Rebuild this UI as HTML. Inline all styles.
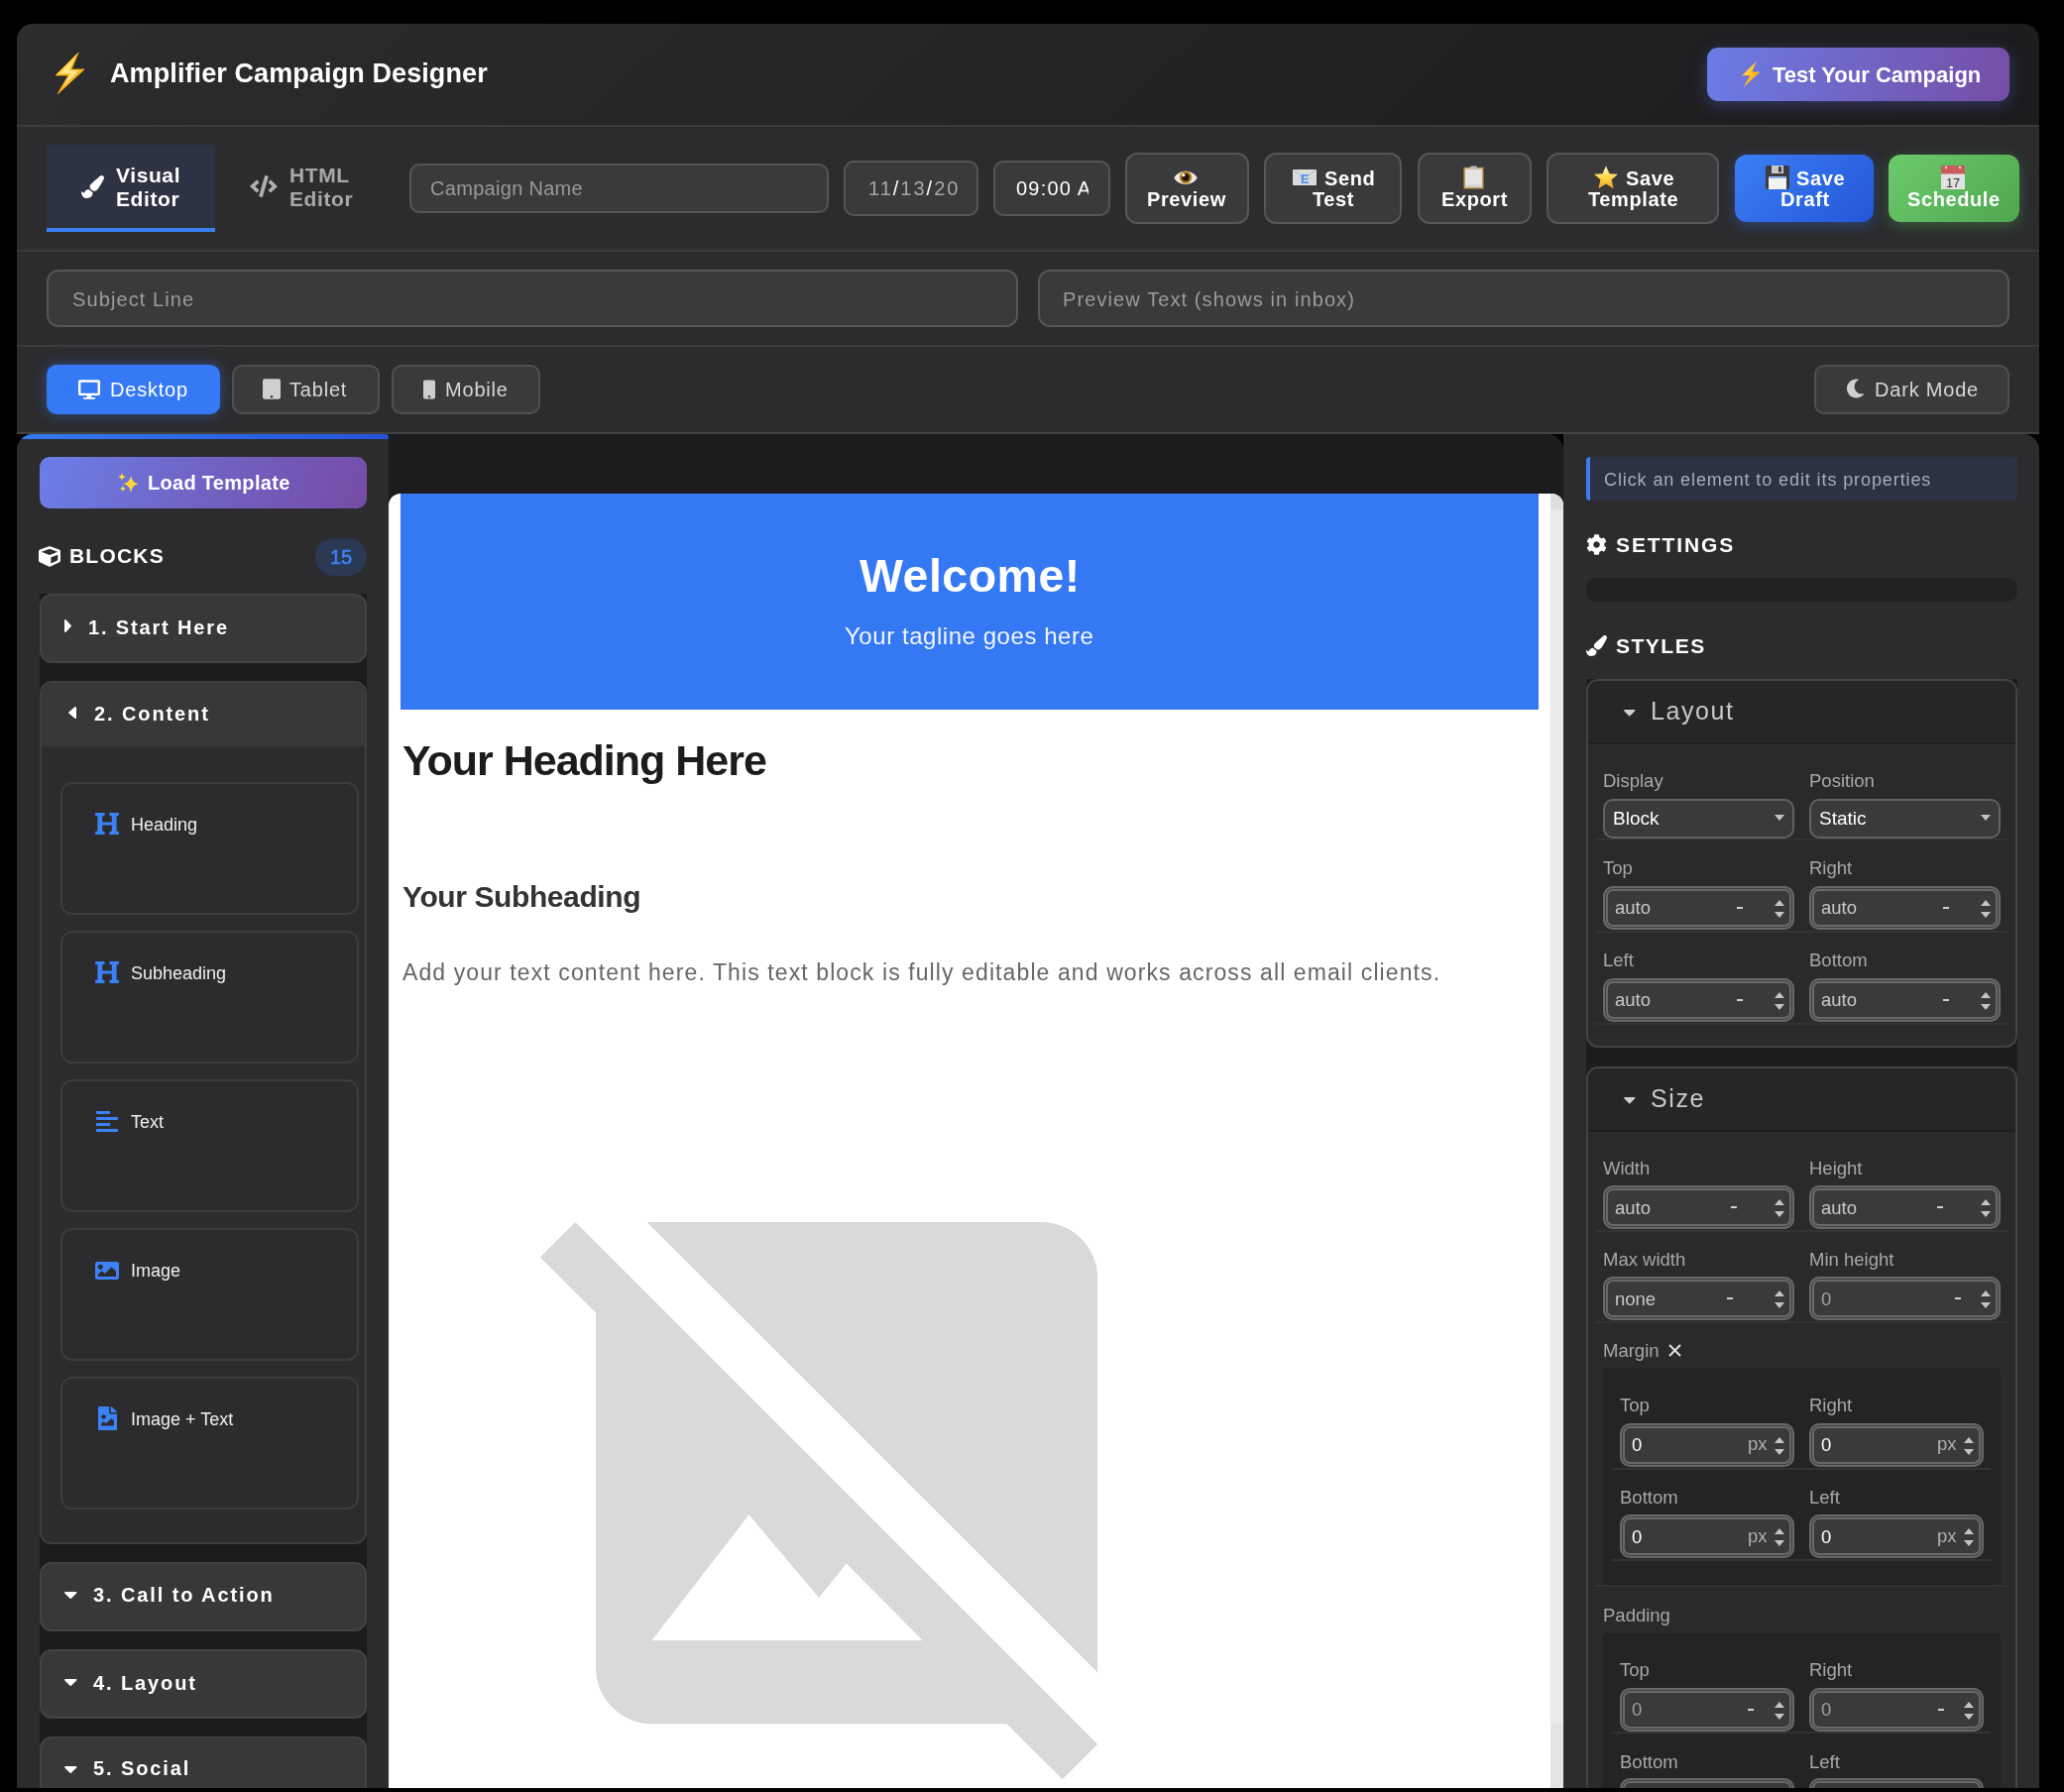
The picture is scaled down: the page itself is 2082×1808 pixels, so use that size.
<!DOCTYPE html>
<html><head><meta charset="utf-8">
<style>
*{box-sizing:border-box;margin:0;padding:0}
html,body{width:2082px;height:1808px;overflow:hidden;background:#000;font-family:"Liberation Sans",sans-serif;position:relative}
.a{position:absolute}
.t{position:absolute;white-space:nowrap;line-height:1;will-change:transform}
svg{position:absolute;display:block}
.hl{position:absolute;left:17px;width:2040px;height:2px;background:#3b3b3d}
.inp{position:absolute;background:#3a3a3c;border:2px solid #565658;border-radius:10px}
.btn{position:absolute;background:#3a3a3c;border:2px solid #575759;border-radius:12px}
.bt{position:absolute;white-space:nowrap;line-height:1;will-change:transform;color:#fff;font-weight:700;font-size:20px;letter-spacing:0.6px}
.dv{position:absolute;top:368px;height:50px;background:#3a3a3c;border:2px solid #505052;border-radius:10px}
.dt{position:absolute;white-space:nowrap;line-height:1;will-change:transform;color:#d8d8d8;font-size:20px;letter-spacing:0.8px;top:383px}
</style></head>
<body>
<!-- ===== HEADER ===== -->
<div class="a" style="left:17px;top:24px;width:2040px;height:103px;border-radius:16px 16px 0 0;background:linear-gradient(135deg,#2c2c2e 0%,#1c1c1e 100%)"></div>
<div class="a" style="left:17px;top:127px;width:2040px;height:311px;background:#2c2c2e"></div>
<div class="hl" style="top:126px"></div>
<div class="hl" style="top:252px"></div>
<div class="hl" style="top:348px"></div>
<div class="hl" style="top:436px;background:#424244"></div>

<!-- bolt -->
<svg style="left:54px;top:52px" width="32" height="44" viewBox="0 0 32 44">
<defs><linearGradient id="bg1" x1="0" y1="0" x2="1" y2="1"><stop offset="0" stop-color="#ffe680"/><stop offset="0.5" stop-color="#ffc21a"/><stop offset="1" stop-color="#f29a12"/></linearGradient></defs>
<polygon points="25,1 2,24 15,24 4,43 31,18 18,18" fill="url(#bg1)" stroke="#f0a020" stroke-width="1"/>
<polygon points="22,6 7,22 17,22 10,35 26,19 15,19" fill="#fff7c0" opacity="0.7"/>
</svg>
<div class="t" style="left:111px;top:61px;font-size:27px;font-weight:700;color:#fff;letter-spacing:0.1px">Amplifier Campaign Designer</div>

<!-- Test your campaign -->
<div class="a" style="left:1722px;top:48px;width:305px;height:54px;border-radius:11px;background:linear-gradient(100deg,#6b7ce6 0%,#7160bd 60%,#764ea6 100%);box-shadow:0 4px 16px rgba(90,110,230,0.35)"></div>
<svg style="left:1754px;top:61px" width="24" height="28" viewBox="0 0 32 44">
<polygon points="25,1 2,24 15,24 4,43 31,18 18,18" fill="url(#bg1)"/>
</svg>
<div class="t" style="left:1788px;top:64.5px;font-size:22px;font-weight:700;color:#fff;letter-spacing:0px">Test Your Campaign</div>

<!-- ===== TOOLBAR ===== -->
<div class="a" style="left:47px;top:146px;width:170px;height:88px;background:#2d3343"></div>
<div class="a" style="left:47px;top:230px;width:170px;height:4px;background:#3b7df2"></div>
<svg style="left:82px;top:177px" width="23" height="23" viewBox="0 0 512 512"><path fill="#fff" d="M167.02 309.34c-40.12 2.58-76.53 17.86-97.19 72.3-2.35 6.210-8 9.98-14.59 9.98-11.11 0-45.46-27.67-55.25-34.35C0 439.62 37.93 512 128 512c75.86 0 128-43.770 128-120.19 0-3.11-.65-6.08-.97-9.13l-88.01-73.34zM457.89 0c-15.16 0-29.37 6.71-40.210 16.45C213.27 199.05 192 203.34 192 257.09c0 13.7 3.25 26.76 8.73 38.7l63.82 53.18c7.21 1.8 14.64 3.03 22.39 3.03 62.11 0 98.11-45.47 211.16-256.46 7.38-14.35 13.9-29.85 13.9-45.99C512 20.64 486 0 457.890 0z"/></svg>
<div class="t" style="left:117px;top:165px;font-size:21px;font-weight:700;color:#fff;letter-spacing:0.6px;line-height:24px">Visual<br>Editor</div>
<svg style="left:252px;top:177px" width="28" height="22" viewBox="0 0 640 512"><path fill="#b0b0b2" d="M278.9 511.5l-61-17.7c-6.4-1.8-10-8.5-8.2-14.9L346.2 8.7c1.8-6.4 8.5-10 14.9-8.2l61 17.7c6.4 1.8 10 8.5 8.2 14.9L293.8 503.300c-1.9 6.4-8.5 10.1-14.9 8.2zm-114-112.2l43.5-46.4c4.6-4.9 4.3-12.7-.8-17.2L117 256l90.6-79.7c5.1-4.5 5.5-12.3.8-17.2l-43.5-46.4c-4.5-4.8-12.1-5.1-17-.5L3.8 247.2c-5.1 4.7-5.1 12.8 0 17.5l144.1 135.1c4.9 4.6 12.5 4.4 17-.5zm327.2.6l144.1-135.1c5.1-4.7 5.1-12.8 0-17.5L492.1 112.1c-4.8-4.5-12.4-4.3-17 .5L431.6 159c-4.6 4.9-4.3 12.7.8 17.2L523 256l-90.6 79.7c-5.1 4.5-5.5 12.3-.8 17.2l43.5 46.4c4.5 4.9 12.1 5.1 17 .6z"/></svg>
<div class="t" style="left:292px;top:165px;font-size:21px;font-weight:700;color:#a9a9ab;letter-spacing:0.6px;line-height:24px">HTML<br>Editor</div>

<div class="inp" style="left:413px;top:165px;width:423px;height:50px"></div>
<div class="t" style="left:434px;top:180.3px;font-size:20px;color:#9a9a9c;letter-spacing:0.3px">Campaign Name</div>
<div class="inp" style="left:851px;top:162px;width:136px;height:56px;background:#3a3a3c"></div>
<div class="t" style="left:876px;top:180.3px;font-size:20px;color:#a8a8aa;letter-spacing:2px">11<span style="color:#fff">/</span>13<span style="color:#fff">/</span>20</div>
<div class="inp" style="left:1002px;top:162px;width:118px;height:56px;background:#3a3a3c"></div>
<div class="a" style="left:1020px;top:170px;width:78px;height:40px;overflow:hidden"><div class="t" style="left:5px;top:10.3px;font-size:20px;color:#fff;letter-spacing:1.2px">09:00 A</div></div>

<div class="btn" style="left:1135px;top:154px;width:125px;height:72px"></div>
<div class="btn" style="left:1275px;top:154px;width:139px;height:72px"></div>
<div class="btn" style="left:1430px;top:154px;width:115px;height:72px"></div>
<div class="btn" style="left:1560px;top:154px;width:174px;height:72px"></div>
<div class="a" style="left:1750px;top:156px;width:140px;height:68px;border-radius:12px;background:linear-gradient(135deg,#3b7ef5 0%,#2456d6 100%);box-shadow:0 4px 14px rgba(50,110,240,0.35)"></div>
<div class="a" style="left:1905px;top:156px;width:132px;height:68px;border-radius:12px;background:linear-gradient(135deg,#6bcb6b 0%,#4fa64f 100%);box-shadow:0 4px 14px rgba(90,200,90,0.3)"></div>
<!-- eye -->
<svg style="left:1184px;top:170px" width="24" height="18" viewBox="0 0 24 18"><defs><radialGradient id="irg" cx="0.5" cy="0.5" r="0.5"><stop offset="0.55" stop-color="#8a5a1c"/><stop offset="1" stop-color="#d4a21e"/></radialGradient></defs><path d="M0.3 9.5 C5 0.5, 19 0.5, 23.7 9.5 C19 18, 5 18, 0.3 9.5Z" fill="#efe9ef"/><circle cx="12" cy="9" r="6.4" fill="url(#irg)"/><circle cx="12" cy="9" r="3.7" fill="#24140e"/><circle cx="9.8" cy="6.6" r="1.7" fill="#fff"/></svg>
<div class="bt" style="left:1156.5px;top:191px">Preview</div>
<!-- envelope -->
<svg style="left:1304px;top:171px" width="24" height="16" viewBox="0 0 24 16"><rect x="0" y="0" width="24" height="16" fill="#dcdcdc"/><path d="M0 0 L12 9 L24 0" fill="none" stroke="#b5b5b5" stroke-width="0.8"/><path d="M0 16 L9 7 M24 16 L15 7" stroke="#c4c4c4" stroke-width="0.6"/><text x="12" y="13.5" font-family="Liberation Sans" font-weight="700" font-size="13" text-anchor="middle" fill="#4a8df0">E</text></svg>
<div class="bt" style="left:1335.5px;top:170px">Send</div>
<div class="bt" style="left:1324px;top:191px">Test</div>
<!-- clipboard -->
<svg style="left:1476px;top:167px" width="21" height="24" viewBox="0 0 21 24"><rect x="0.5" y="1.8" width="20" height="21.7" fill="#c89a4e"/><rect x="2" y="3.5" width="17" height="18.5" fill="#e4e4e4"/><rect x="2" y="19.5" width="17" height="2" fill="#cfcfcf"/><rect x="7" y="0.5" width="7" height="3" rx="1.5" fill="#b9bcc4"/></svg>
<div class="bt" style="left:1453.5px;top:191px">Export</div>
<!-- star -->
<svg style="left:1607px;top:167px" width="26" height="24" viewBox="0 0 26 24"><defs><linearGradient id="stg" x1="0" y1="0" x2="0" y2="1"><stop offset="0" stop-color="#fff6c8"/><stop offset="0.5" stop-color="#ffd84a"/><stop offset="1" stop-color="#e9a320"/></linearGradient></defs><polygon points="13,0.5 16.5,8.2 25,8.8 18.6,14.3 20.6,23.3 13,18.6 5.4,23.3 7.4,14.3 1,8.8 9.5,8.2" fill="url(#stg)"/></svg>
<div class="bt" style="left:1639.5px;top:170px">Save</div>
<div class="bt" style="left:1602px;top:191px">Template</div>
<!-- floppy -->
<svg style="left:1781px;top:167px" width="24" height="24" viewBox="0 0 24 24"><rect x="0" y="0" width="24" height="24" rx="2" fill="#3d3d40"/><rect x="6" y="0" width="12" height="8" fill="#c9c9cc"/><rect x="13" y="1.2" width="3" height="5.5" fill="#3d3d40"/><rect x="3" y="11" width="18" height="13" fill="#f2f2f2"/><rect x="3" y="11" width="18" height="2" fill="#8fb8e8"/></svg>
<div class="bt" style="left:1812px;top:170px">Save</div>
<div class="bt" style="left:1796px;top:191px">Draft</div>
<!-- calendar -->
<svg style="left:1958px;top:167px" width="24" height="24" viewBox="0 0 24 24"><rect x="0" y="0" width="24" height="24" fill="#e2e2e2"/><rect x="0" y="0" width="24" height="8.5" fill="#c95b5b"/><circle cx="5" cy="2" r="1.2" fill="#d8e8d0"/><circle cx="19" cy="2" r="1.2" fill="#d8e8d0"/><text x="12" y="21.5" font-family="Liberation Sans" font-size="12.5" text-anchor="middle" fill="#333">17</text></svg>
<div class="bt" style="left:1923.5px;top:191px">Schedule</div>


<!-- ===== SUBJECT ROW ===== -->
<div class="inp" style="left:47px;top:272px;width:980px;height:58px;border-radius:12px"></div>
<div class="t" style="left:73px;top:292px;font-size:20px;color:#9c9c9e;letter-spacing:1.1px">Subject Line</div>
<div class="inp" style="left:1047px;top:272px;width:980px;height:58px;border-radius:12px"></div>
<div class="t" style="left:1072px;top:292px;font-size:20px;color:#9c9c9e;letter-spacing:1.1px">Preview Text (shows in inbox)</div>

<!-- ===== DEVICE ROW ===== -->
<div class="a" style="left:47px;top:368px;width:175px;height:50px;border-radius:10px;background:#3679f5;box-shadow:0 0 14px rgba(54,121,245,0.45)"></div>
<svg style="left:79px;top:383px" width="22" height="20" viewBox="0 0 576 512"><path fill="#fff" d="M528 0H48C21.5 0 0 21.5 0 48v320c0 26.5 21.5 48 48 48h192l-16 48h-72c-13.3 0-24 10.7-24 24s10.7 24 24 24h272c13.3 0 24-10.7 24-24s-10.7-24-24-24h-72l-16-48h192c26.5 0 48-21.5 48-48V48c0-26.5-21.5-48-48-48zm-16 352H64V64h448v288z"/></svg>
<div class="dt" style="left:111px;color:#fff">Desktop</div>
<div class="dv" style="left:234px;width:149px"></div>
<svg style="left:265px;top:382px" width="18" height="21" viewBox="0 0 448 512"><path fill="#cfcfd1" d="M400 0H48C21.5 0 0 21.5 0 48v416c0 26.5 21.5 48 48 48h352c26.5 0 48-21.5 48-48V48c0-26.5-21.5-48-48-48zM224 480c-17.7 0-32-14.3-32-32s14.3-32 32-32 32 14.3 32 32-14.3 32-32 32z"/></svg>
<div class="dt" style="left:292px">Tablet</div>
<div class="dv" style="left:395px;width:150px"></div>
<svg style="left:427px;top:383px" width="12" height="20" viewBox="0 0 320 512"><path fill="#cfcfd1" d="M272 0H48C21.5 0 0 21.5 0 48v416c0 26.5 21.5 48 48 48h224c26.5 0 48-21.5 48-48V48c0-26.5-21.5-48-48-48zM160 480c-17.7 0-32-14.3-32-32s14.3-32 32-32 32 14.3 32 32-14.3 32-32 32z"/></svg>
<div class="dt" style="left:449px">Mobile</div>
<div class="dv" style="left:1830px;width:197px"></div>
<svg style="left:1862px;top:382px" width="19" height="20" viewBox="0 0 512 512"><path fill="#cfcfd1" d="M283.211 512c78.962 0 151.079-35.925 198.857-94.792 7.068-8.708-.639-21.43-11.562-19.35-124.203 23.654-238.262-71.576-238.262-197.87 0-72.748 38.947-139.645 102.245-175.67 9.792-5.545 7.854-20.379-3.158-22.415A258.156 258.156 0 0 0 283.211 0c-141.309 0-256 114.511-256 256 0 141.309 114.511 256 256 256z"/></svg>
<div class="dt" style="left:1891px">Dark Mode</div>
<!-- ===== MAIN ===== -->
<div class="a" style="left:380px;top:438px;width:1197px;height:1366px;background:#1c1c1e;border-radius:0 16px 0 0"></div>
<div class="a" style="left:1577px;top:438px;width:480px;height:1366px;background:#2c2c2e;border-radius:0 16px 0 0"></div>
<div class="a" style="left:17px;top:438px;width:375px;height:1366px;background:#2c2c2e;border-radius:16px 4px 0 0;overflow:hidden"><div class="a" style="left:0;top:0;width:375px;height:5px;background:linear-gradient(90deg,#3479f2,#2454d8)"></div></div>
<div class="a" style="left:40px;top:461px;width:330px;height:52px;border-radius:10px;background:linear-gradient(110deg,#6a7fe8 0%,#7160c0 55%,#764ca6 100%)"></div>
<svg style="left:118px;top:477px" width="23" height="21" viewBox="0 0 23 21"><path d="M14 3 Q15 10 22 11 Q15 12 14 20 Q13 12 6 11 Q13 10 14 3Z" fill="#ffd83a"/><path d="M5 0 Q5.5 3.5 9 4 Q5.5 4.5 5 8 Q4.5 4.5 1 4 Q4.5 3.5 5 0Z" fill="#ffd83a"/><path d="M6 13 Q6.4 15.6 9 16 Q6.4 16.4 6 19 Q5.6 16.4 3 16 Q5.6 15.6 6 13Z" fill="#ffd83a"/></svg>
<div class="t" style="left:148.5px;top:477.4px;font-size:20px;color:#fff;font-weight:700;letter-spacing:0.3px;">Load Template</div>
<svg style="left:39px;top:551px" width="22" height="21" viewBox="0 0 512 512" preserveAspectRatio="none"><path fill="#fff" d="M239.1 6.3l-208 78c-18.7 7-31.1 25-31.1 45v225.1c0 18.2 10.3 34.8 26.5 42.9l208 104c13.5 6.8 29.4 6.8 42.9 0l208-104c16.3-8.1 26.5-24.8 26.5-42.9V129.3c0-20-12.4-37.9-31.1-44.900l-208-78C262 2.2 250 2.2 239.1 6.3zM256 68.4l192 72v1.1l-192 78-192-78v-1.1l192-72zm32 356V275.5l160-65v133.9l-160 80z"/></svg>
<div class="t" style="left:70px;top:550.4px;font-size:21px;color:#fff;font-weight:700;letter-spacing:1.2px;">BLOCKS</div>
<div class="a" style="left:318px;top:543px;width:52px;height:38px;border-radius:19px;background:#2b3954"></div>
<div class="t" style="left:332.5px;top:552.0px;font-size:20px;color:#3b82f6;-webkit-text-stroke:0.6px #3b82f6;">15</div>
<div class="a" style="left:40px;top:599px;width:330px;height:1205px;background:#1c1c1e"></div>
<div class="a" style="left:40px;top:599px;width:330px;height:70px;background:#38383a;border:2px solid #434345;border-radius:12px"></div>
<svg style="left:65px;top:625px" width="7" height="13" viewBox="0 107 169 298" preserveAspectRatio="none"><path fill="#fff" d="M0 384.662V127.338c0-17.818 21.543-26.741 34.142-14.142l128.662 128.662c7.81 7.81 7.81 20.474 0 28.284L34.142 398.804C21.543 411.404 0 402.480 0 384.662z"/></svg>
<div class="t" style="left:89px;top:622.5px;font-size:20px;color:#fff;font-weight:700;letter-spacing:1.85px;">1. Start Here</div>
<div class="a" style="left:40px;top:687px;width:330px;height:871px;background:#2c2c2e;border:2px solid #3e3e40;border-radius:12px;overflow:hidden"><div class="a" style="left:0;top:0;width:326px;height:64px;background:#38383a"></div></div>
<svg style="left:69px;top:713px" width="8" height="12" viewBox="23 107 169 298" preserveAspectRatio="none"><path fill="#fff" d="M192 127.338v257.324c0 17.818-21.543 26.741-34.142 14.142L29.196 270.142c-7.81-7.81-7.81-20.474 0-28.284l128.662-128.662c12.599-12.6 34.142-3.676 34.142 14.142z"/></svg>
<div class="t" style="left:94.6px;top:710.3px;font-size:20px;color:#fff;font-weight:700;letter-spacing:1.9px;">2. Content</div>
<div class="a" style="left:61px;top:789px;width:301px;height:133.5px;border:2px solid #3c3c3e;border-radius:12px"></div>
<svg style="left:96px;top:820px" width="24" height="22" viewBox="16 32 480 448" preserveAspectRatio="none"><path fill="#3b82f6" d="M448 96v320h32a16 16 0 0 1 16 16v32a16 16 0 0 1-16 16H320a16 16 0 0 1-16-16v-32a16 16 0 0 1 16-16h32V288H160v128h32a16 16 0 0 1 16 16v32a16 16 0 0 1-16 16H32a16 16 0 0 1-16-16v-32a16 16 0 0 1 16-16h32V96H32a16 16 0 0 1-16-16V48a16 16 0 0 1 16-16h160a16 16 0 0 1 16 16v32a16 16 0 0 1-16 16h-32v128h192V96h-32a16 16 0 0 1-16-16V48a16 16 0 0 1 16-16h160a16 16 0 0 1 16 16v32a16 16 0 0 1-16 16z"/></svg>
<div class="t" style="left:132.3px;top:823.1px;font-size:18px;color:#f0f0f0;">Heading</div>
<div class="a" style="left:61px;top:939px;width:301px;height:133.5px;border:2px solid #3c3c3e;border-radius:12px"></div>
<svg style="left:96px;top:970px" width="24" height="22" viewBox="16 32 480 448" preserveAspectRatio="none"><path fill="#3b82f6" d="M448 96v320h32a16 16 0 0 1 16 16v32a16 16 0 0 1-16 16H320a16 16 0 0 1-16-16v-32a16 16 0 0 1 16-16h32V288H160v128h32a16 16 0 0 1 16 16v32a16 16 0 0 1-16 16H32a16 16 0 0 1-16-16v-32a16 16 0 0 1 16-16h32V96H32a16 16 0 0 1-16-16V48a16 16 0 0 1 16-16h160a16 16 0 0 1 16 16v32a16 16 0 0 1-16 16h-32v128h192V96h-32a16 16 0 0 1-16-16V48a16 16 0 0 1 16-16h160a16 16 0 0 1 16 16v32a16 16 0 0 1-16 16z"/></svg>
<div class="t" style="left:132.3px;top:973.1px;font-size:18px;color:#f0f0f0;">Subheading</div>
<div class="a" style="left:61px;top:1089px;width:301px;height:133.5px;border:2px solid #3c3c3e;border-radius:12px"></div>
<svg style="left:97px;top:1121px" width="22" height="21" viewBox="0 32 448 448" preserveAspectRatio="none"><path fill="#3b82f6" d="M12.83 352h262.34A12.82 12.82 0 0 0 288 339.17v-38.34A12.82 12.82 0 0 0 275.17 288H12.83A12.82 12.82 0 0 0 0 300.83v38.34A12.82 12.82 0 0 0 12.83 352zm0-256h262.34A12.82 12.82 0 0 0 288 83.17V44.83A12.82 12.82 0 0 0 275.17 32H12.83A12.82 12.82 0 0 0 0 44.83v38.34A12.82 12.82 0 0 0 12.83 96zM432 160H16a16 16 0 0 0-16 16v32a16 16 0 0 0 16 16h416a16 16 0 0 0 16-16v-32a16 16 0 0 0-16-16zm0 256H16a16 16 0 0 0-16 16v32a16 16 0 0 0 16 16h416a16 16 0 0 0 16-16v-32a16 16 0 0 0-16-16z"/></svg>
<div class="t" style="left:132.3px;top:1123.1px;font-size:18px;color:#f0f0f0;">Text</div>
<div class="a" style="left:61px;top:1239px;width:301px;height:133.5px;border:2px solid #3c3c3e;border-radius:12px"></div>
<svg style="left:96px;top:1273px" width="24" height="18" viewBox="0 64 512 384" preserveAspectRatio="none"><path fill="#3b82f6" d="M464 448H48c-26.51 0-48-21.49-48-48V112c0-26.51 21.49-48 48-48h416c26.51 0 48 21.49 48 48v288c0 26.51-21.49 48-48 48zM112 120c-30.928 0-56 25.072-56 56s25.072 56 56 56 56-25.072 56-56-25.072-56-56-56zM64 384h384V272l-87.515-87.515c-4.686-4.686-12.284-4.686-16.971 0L208 320l-55.515-55.515c-4.686-4.686-12.284-4.686-16.971 0L64 336v48z"/></svg>
<div class="t" style="left:132.3px;top:1273.1px;font-size:18px;color:#f0f0f0;">Image</div>
<div class="a" style="left:61px;top:1389px;width:301px;height:133.5px;border:2px solid #3c3c3e;border-radius:12px"></div>
<svg style="left:99px;top:1419px" width="19" height="24" viewBox="0 0 384 512" preserveAspectRatio="none"><path fill="#3b82f6" d="M384 121.941V128H256V0h6.059a24 24 0 0 1 16.97 7.029l97.941 97.941a24.002 24.002 0 0 1 7.03 16.971zM248 160c-13.2 0-24-10.8-24-24V0H24C10.745 0 0 10.745 0 24v464c0 13.255 10.745 24 24 24h336c13.255 0 24-10.745 24-24V160H248zm-135.455 16c26.51 0 48 21.49 48 48s-21.49 48-48 48-48-21.49-48-48 21.491-48 48-48zm208 240h-256l.485-48.485L104.545 328c4.686-4.686 11.799-4.201 16.485.485L160.545 368 264.06 264.485c4.686-4.686 12.284-4.686 16.971 0L320.545 304v112z"/></svg>
<div class="t" style="left:132.3px;top:1423.1px;font-size:18px;color:#f0f0f0;">Image + Text</div>
<div class="a" style="left:40px;top:1576px;width:330px;height:70px;background:#38383a;border:2px solid #434345;border-radius:12px"></div>
<svg style="left:65px;top:1606px" width="12.5" height="7" viewBox="10 192 300 169" preserveAspectRatio="none"><path fill="#fff" d="M31.3 192h257.3c17.8 0 26.7 21.5 14.1 34.1L174.1 354.8c-7.8 7.8-20.5 7.8-28.3 0L17.2 226.1C4.6 213.5 13.5 192 31.3 192z"/></svg>
<div class="t" style="left:94.3px;top:1599.1px;font-size:20px;color:#fff;font-weight:700;letter-spacing:1.9px;">3. Call to Action</div>
<div class="a" style="left:40px;top:1664px;width:330px;height:70px;background:#38383a;border:2px solid #434345;border-radius:12px"></div>
<svg style="left:65px;top:1694px" width="12.5" height="7" viewBox="10 192 300 169" preserveAspectRatio="none"><path fill="#fff" d="M31.3 192h257.3c17.8 0 26.7 21.5 14.1 34.1L174.1 354.8c-7.8 7.8-20.5 7.8-28.3 0L17.2 226.1C4.6 213.5 13.5 192 31.3 192z"/></svg>
<div class="t" style="left:94.3px;top:1687.6px;font-size:20px;color:#fff;font-weight:700;letter-spacing:1.9px;">4. Layout</div>
<div class="a" style="left:40px;top:1752px;width:330px;height:78px;background:#38383a;border:2px solid #434345;border-radius:12px"></div>
<svg style="left:65px;top:1782px" width="12.5" height="7" viewBox="10 192 300 169" preserveAspectRatio="none"><path fill="#fff" d="M31.3 192h257.3c17.8 0 26.7 21.5 14.1 34.1L174.1 354.8c-7.8 7.8-20.5 7.8-28.3 0L17.2 226.1C4.6 213.5 13.5 192 31.3 192z"/></svg>
<div class="t" style="left:94.3px;top:1774.4px;font-size:20px;color:#fff;font-weight:700;letter-spacing:1.9px;">5. Social</div>
<div class="a" style="left:392px;top:498px;width:1185px;height:1306px;background:#fff;border-radius:12px 12px 0 0;overflow:hidden"><div class="a" style="left:1172px;top:0;width:13px;height:1306px;background:#e9e9e9"></div><div class="a" style="left:1172px;top:0;width:13px;height:16px;background:#dedede"></div><div class="a" style="left:1172px;top:1242px;width:13px;height:64px;background:#e3e3e3"></div></div>
<div class="a" style="left:404px;top:498px;width:1148px;height:218px;background:#3578f3"></div>
<div class="t" style="left:867px;top:557.6px;font-size:46.5px;color:#fff;font-weight:700;letter-spacing:0.5px;">Welcome!</div>
<div class="t" style="left:852px;top:629.7px;font-size:24px;color:#f2f6ff;letter-spacing:0.55px;">Your tagline goes here</div>
<div class="t" style="left:405.7px;top:746.1px;font-size:43px;color:#1c1c1e;font-weight:700;letter-spacing:-1px;">Your Heading Here</div>
<div class="t" style="left:405.7px;top:890.3px;font-size:30px;color:#333;font-weight:700;letter-spacing:-0.4px;">Your Subheading</div>
<div class="t" style="left:405.7px;top:969.9px;font-size:23px;color:#666;letter-spacing:1.1px;">Add your text content here. This text block is fully editable and works across all email clients.</div>
<svg style="left:0;top:0" width="2082" height="1808" viewBox="0 0 2082 1808"><g fill="#d9d9d9">
<path d="M652.6 1232.9 H1050 A57 57 0 0 1 1107.2 1290 V1687.5 Z"/>
<path d="M580.4 1232.9 L1107.2 1759.7 L1071.7 1795.2 L1015.6 1739.3 H658 A57 57 0 0 1 601 1682 V1324.6 L544.8 1268.4 Z M657.5 1655 H930.6 L853.8 1577.6 L826.1 1612.1 L755.5 1528.2 Z" fill-rule="evenodd"/>
</g></svg>
<div class="a" style="left:1600px;top:461px;width:435px;height:44px;background:#2b3343;border-left:4px solid #3b7ef2;border-radius:4px"></div>
<div class="t" style="left:1618px;top:475.0px;font-size:18px;color:#a6adba;letter-spacing:0.9px;">Click an element to edit its properties</div>
<svg style="left:1600px;top:539px" width="21" height="21" viewBox="0 0 512 512" preserveAspectRatio="none"><path fill="#fff" d="M487.4 315.7l-42.6-24.6c4.3-23.2 4.3-47 0-70.2l42.6-24.6c4.9-2.8 7.1-8.6 5.5-14-11.1-35.6-30-67.8-54.7-94.6-3.8-4.1-10-5.1-14.8-2.3L380.8 110c-17.9-15.4-38.5-27.3-60.8-35.1V25.8c0-5.6-3.9-10.5-9.4-11.7-36.7-8.2-74.3-7.8-109.2 0-5.5 1.2-9.4 6.1-9.4 11.7V75c-22.2 7.9-42.8 19.8-60.8 35.1L88.7 85.5c-4.9-2.8-11-1.9-14.8 2.3-24.7 26.7-43.6 58.9-54.7 94.6-1.7 5.4.6 11.2 5.5 14L67.3 221c-4.3 23.2-4.3 47 0 70.2l-42.6 24.6c-4.9 2.8-7.1 8.6-5.5 14 11.1 35.6 30 67.8 54.7 94.6 3.8 4.1 10 5.1 14.8 2.3l42.6-24.6c17.9 15.4 38.5 27.3 60.8 35.1v49.2c0 5.6 3.9 10.5 9.4 11.7 36.7 8.2 74.3 7.8 109.2 0 5.5-1.2 9.4-6.1 9.4-11.7v-49.2c22.2-7.9 42.8-19.8 60.8-35.1l42.6 24.6c4.9 2.8 11 1.9 14.8-2.3 24.7-26.7 43.6-58.9 54.7-94.6 1.5-5.5-.7-11.3-5.6-14.1zM256 336c-44.1 0-80-35.9-80-80s35.9-80 80-80 80 35.9 80 80-35.9 80-80 80z"/></svg>
<div class="t" style="left:1630px;top:539.4px;font-size:21px;color:#fff;font-weight:700;letter-spacing:1.9px;">SETTINGS</div>
<div class="a" style="left:1600px;top:583px;width:435px;height:24px;background:#222224;border-radius:10px"></div>
<svg style="left:1600px;top:641px" width="21" height="21" viewBox="0 0 512 512" preserveAspectRatio="none"><path fill="#fff" d="M167.02 309.34c-40.12 2.58-76.53 17.86-97.19 72.3-2.35 6.21-8 9.98-14.59 9.98-11.11 0-45.46-27.67-55.25-34.35C0 439.62 37.93 512 128 512c75.86 0 128-43.77 128-120.19 0-3.11-.65-6.08-.97-9.13l-88.01-73.34zM457.89 0c-15.16 0-29.37 6.71-40.21 16.45C213.27 199.05 192 203.34 192 257.09c0 13.7 3.25 26.76 8.73 38.7l63.82 53.18c7.21 1.8 14.64 3.03 22.39 3.03 62.11 0 98.11-45.47 211.160-256.46 7.38-14.35 13.9-29.85 13.9-45.99C512 20.64 486 0 457.89 0z"/></svg>
<div class="t" style="left:1630px;top:641.2px;font-size:21px;color:#fff;font-weight:700;letter-spacing:1.5px;">STYLES</div>
<div class="a" style="left:1600px;top:685px;width:435px;height:1119px;background:#1c1c1e"></div>
<div class="a" style="left:1600px;top:685px;width:435px;height:372px;background:#2a2a2c;border:2px solid #434345;border-radius:12px;overflow:hidden"><div class="a" style="left:0;top:0;width:431px;height:64px;background:#262628;border-bottom:2px solid #1e1e20"></div></div>
<svg style="left:1638px;top:716px" width="11.5" height="6.5" viewBox="10 192 300 169" preserveAspectRatio="none"><path fill="#d0d0d0" d="M31.3 192h257.3c17.8 0 26.7 21.5 14.1 34.1L174.1 354.8c-7.8 7.8-20.5 7.8-28.3 0L17.2 226.1C4.6 213.5 13.5 192 31.3 192z"/></svg>
<div class="t" style="left:1665px;top:704.8px;font-size:25px;color:#c8c8ca;letter-spacing:1.6px;">Layout</div>
<div class="t" style="left:1617px;top:778.7px;font-size:18.5px;color:#a8a8aa;">Display</div>
<div class="t" style="left:1825.3px;top:778.7px;font-size:18.5px;color:#a8a8aa;">Position</div>
<div class="a" style="left:1617px;top:805.5px;width:193px;height:40px;background:#3a3a3c;border:2px solid #626264;border-radius:10px"></div>
<div class="t" style="left:1627px;top:816.0px;font-size:19px;color:#fff;">Block</div>
<svg style="left:1790px;top:822.0px" width="10" height="6" viewBox="0 0 10 6"><path d="M0 0 H10 L5 6Z" fill="#c4c4c6"/></svg>
<div class="a" style="left:1825px;top:805.5px;width:193px;height:40px;background:#3a3a3c;border:2px solid #626264;border-radius:10px"></div>
<div class="t" style="left:1835px;top:816.0px;font-size:19px;color:#fff;">Static</div>
<svg style="left:1998px;top:822.0px" width="10" height="6" viewBox="0 0 10 6"><path d="M0 0 H10 L5 6Z" fill="#c4c4c6"/></svg>
<div class="a" style="left:1609px;top:846px;width:416px;height:2px;background:#333335"></div>
<div class="t" style="left:1617px;top:867.1px;font-size:18.5px;color:#a8a8aa;">Top</div>
<div class="t" style="left:1825.3px;top:867.1px;font-size:18.5px;color:#a8a8aa;">Right</div>
<div class="a" style="left:1617px;top:893.5px;width:193px;height:44px;background:#3a3a3c;border:2px solid #69696b;border-radius:10px;box-shadow:inset 0 0 0 1px #404042,inset 0 0 0 3px #69696b"></div>
<div class="t" style="left:1628.5px;top:907.3px;font-size:18.5px;color:#c8c8c8;">auto</div>
<div class="a" style="left:1752px;top:914.5px;width:6px;height:2px;background:#d0d0d0"></div>
<svg style="left:1790px;top:907.5px" width="10" height="18" viewBox="0 0 10 18"><path d="M5 0 L10 6 H0Z M0 12 H10 L5 18Z" fill="#c4c4c6"/></svg>
<div class="a" style="left:1825px;top:893.5px;width:193px;height:44px;background:#3a3a3c;border:2px solid #69696b;border-radius:10px;box-shadow:inset 0 0 0 1px #404042,inset 0 0 0 3px #69696b"></div>
<div class="t" style="left:1836.5px;top:907.3px;font-size:18.5px;color:#c8c8c8;">auto</div>
<div class="a" style="left:1960px;top:914.5px;width:6px;height:2px;background:#d0d0d0"></div>
<svg style="left:1998px;top:907.5px" width="10" height="18" viewBox="0 0 10 18"><path d="M5 0 L10 6 H0Z M0 12 H10 L5 18Z" fill="#c4c4c6"/></svg>
<div class="a" style="left:1609px;top:938.5px;width:416px;height:2px;background:#333335"></div>
<div class="t" style="left:1617px;top:959.6px;font-size:18.5px;color:#a8a8aa;">Left</div>
<div class="t" style="left:1825.3px;top:959.6px;font-size:18.5px;color:#a8a8aa;">Bottom</div>
<div class="a" style="left:1617px;top:986.5px;width:193px;height:44px;background:#3a3a3c;border:2px solid #69696b;border-radius:10px;box-shadow:inset 0 0 0 1px #404042,inset 0 0 0 3px #69696b"></div>
<div class="t" style="left:1628.5px;top:1000.3px;font-size:18.5px;color:#c8c8c8;">auto</div>
<div class="a" style="left:1752px;top:1007.5px;width:6px;height:2px;background:#d0d0d0"></div>
<svg style="left:1790px;top:1000.5px" width="10" height="18" viewBox="0 0 10 18"><path d="M5 0 L10 6 H0Z M0 12 H10 L5 18Z" fill="#c4c4c6"/></svg>
<div class="a" style="left:1825px;top:986.5px;width:193px;height:44px;background:#3a3a3c;border:2px solid #69696b;border-radius:10px;box-shadow:inset 0 0 0 1px #404042,inset 0 0 0 3px #69696b"></div>
<div class="t" style="left:1836.5px;top:1000.3px;font-size:18.5px;color:#c8c8c8;">auto</div>
<div class="a" style="left:1960px;top:1007.5px;width:6px;height:2px;background:#d0d0d0"></div>
<svg style="left:1998px;top:1000.5px" width="10" height="18" viewBox="0 0 10 18"><path d="M5 0 L10 6 H0Z M0 12 H10 L5 18Z" fill="#c4c4c6"/></svg>
<div class="a" style="left:1609px;top:1031.5px;width:416px;height:2px;background:#333335"></div>
<div class="a" style="left:1600px;top:1075.5px;width:435px;height:800px;background:#2a2a2c;border:2px solid #434345;border-radius:12px;overflow:hidden"><div class="a" style="left:0;top:0;width:431px;height:64px;background:#262628;border-bottom:2px solid #1e1e20"></div></div>
<svg style="left:1638px;top:1107px" width="11.5" height="6.5" viewBox="10 192 300 169" preserveAspectRatio="none"><path fill="#d0d0d0" d="M31.3 192h257.3c17.8 0 26.7 21.5 14.1 34.1L174.1 354.8c-7.8 7.8-20.5 7.8-28.3 0L17.2 226.1C4.6 213.5 13.5 192 31.3 192z"/></svg>
<div class="t" style="left:1665px;top:1096.2px;font-size:25px;color:#c8c8ca;letter-spacing:1.6px;">Size</div>
<div class="t" style="left:1617px;top:1169.6px;font-size:18.5px;color:#a8a8aa;">Width</div>
<div class="t" style="left:1825.3px;top:1169.6px;font-size:18.5px;color:#a8a8aa;">Height</div>
<div class="a" style="left:1617px;top:1195.8px;width:193px;height:44px;background:#3a3a3c;border:2px solid #69696b;border-radius:10px;box-shadow:inset 0 0 0 1px #404042,inset 0 0 0 3px #69696b"></div>
<div class="t" style="left:1628.5px;top:1209.6px;font-size:18.5px;color:#c8c8c8;">auto</div>
<div class="a" style="left:1746px;top:1216.8px;width:6px;height:2px;background:#d0d0d0"></div>
<svg style="left:1790px;top:1209.8px" width="10" height="18" viewBox="0 0 10 18"><path d="M5 0 L10 6 H0Z M0 12 H10 L5 18Z" fill="#c4c4c6"/></svg>
<div class="a" style="left:1825px;top:1195.8px;width:193px;height:44px;background:#3a3a3c;border:2px solid #69696b;border-radius:10px;box-shadow:inset 0 0 0 1px #404042,inset 0 0 0 3px #69696b"></div>
<div class="t" style="left:1836.5px;top:1209.6px;font-size:18.5px;color:#c8c8c8;">auto</div>
<div class="a" style="left:1954px;top:1216.8px;width:6px;height:2px;background:#d0d0d0"></div>
<svg style="left:1998px;top:1209.8px" width="10" height="18" viewBox="0 0 10 18"><path d="M5 0 L10 6 H0Z M0 12 H10 L5 18Z" fill="#c4c4c6"/></svg>
<div class="a" style="left:1609px;top:1240.5px;width:416px;height:2px;background:#333335"></div>
<div class="t" style="left:1617px;top:1261.7px;font-size:18.5px;color:#a8a8aa;">Max width</div>
<div class="t" style="left:1825.3px;top:1261.7px;font-size:18.5px;color:#a8a8aa;">Min height</div>
<div class="a" style="left:1617px;top:1288.4px;width:193px;height:44px;background:#3a3a3c;border:2px solid #69696b;border-radius:10px;box-shadow:inset 0 0 0 1px #404042,inset 0 0 0 3px #69696b"></div>
<div class="t" style="left:1628.5px;top:1302.2px;font-size:18.5px;color:#c8c8c8;">none</div>
<div class="a" style="left:1742px;top:1309.4px;width:6px;height:2px;background:#d0d0d0"></div>
<svg style="left:1790px;top:1302.4px" width="10" height="18" viewBox="0 0 10 18"><path d="M5 0 L10 6 H0Z M0 12 H10 L5 18Z" fill="#c4c4c6"/></svg>
<div class="a" style="left:1825px;top:1288.4px;width:193px;height:44px;background:#3a3a3c;border:2px solid #69696b;border-radius:10px;box-shadow:inset 0 0 0 1px #404042,inset 0 0 0 3px #69696b"></div>
<div class="t" style="left:1836.5px;top:1302.2px;font-size:18.5px;color:#a4a4a6;">0</div>
<div class="a" style="left:1972px;top:1309.4px;width:6px;height:2px;background:#d0d0d0"></div>
<svg style="left:1998px;top:1302.4px" width="10" height="18" viewBox="0 0 10 18"><path d="M5 0 L10 6 H0Z M0 12 H10 L5 18Z" fill="#c4c4c6"/></svg>
<div class="a" style="left:1609px;top:1333px;width:416px;height:2px;background:#333335"></div>
<div class="t" style="left:1617px;top:1354.1px;font-size:18.5px;color:#a8a8aa;">Margin</div>
<svg style="left:1683px;top:1356px" width="13" height="13" viewBox="0 0 13 13"><path d="M1 1 L12 12 M12 1 L1 12" stroke="#e0e0e0" stroke-width="2"/></svg>
<div class="a" style="left:1617px;top:1380.5px;width:401px;height:218px;background:#242426;border:1px solid #1f1f21;border-radius:4px"></div>
<div class="t" style="left:1634.3px;top:1409.3px;font-size:18.5px;color:#a8a8aa;">Top</div>
<div class="t" style="left:1825.2px;top:1409.3px;font-size:18.5px;color:#a8a8aa;">Right</div>
<div class="a" style="left:1634px;top:1435.5px;width:176px;height:44px;background:#3a3a3c;border:2px solid #69696b;border-radius:10px;box-shadow:inset 0 0 0 1px #404042,inset 0 0 0 3px #69696b"></div>
<div class="t" style="left:1645.5px;top:1449.3px;font-size:18.5px;color:#fff;">0</div>
<div class="t" style="left:1763px;top:1447.8px;font-size:18.5px;color:#b0b0b2;">px</div>
<svg style="left:1790px;top:1449.5px" width="10" height="18" viewBox="0 0 10 18"><path d="M5 0 L10 6 H0Z M0 12 H10 L5 18Z" fill="#c4c4c6"/></svg>
<div class="a" style="left:1825px;top:1435.5px;width:176px;height:44px;background:#3a3a3c;border:2px solid #69696b;border-radius:10px;box-shadow:inset 0 0 0 1px #404042,inset 0 0 0 3px #69696b"></div>
<div class="t" style="left:1836.5px;top:1449.3px;font-size:18.5px;color:#fff;">0</div>
<div class="t" style="left:1954px;top:1447.8px;font-size:18.5px;color:#b0b0b2;">px</div>
<svg style="left:1981px;top:1449.5px" width="10" height="18" viewBox="0 0 10 18"><path d="M5 0 L10 6 H0Z M0 12 H10 L5 18Z" fill="#c4c4c6"/></svg>
<div class="a" style="left:1626px;top:1480.5px;width:382px;height:2px;background:#333335"></div>
<div class="t" style="left:1634.3px;top:1501.5px;font-size:18.5px;color:#a8a8aa;">Bottom</div>
<div class="t" style="left:1825.2px;top:1501.5px;font-size:18.5px;color:#a8a8aa;">Left</div>
<div class="a" style="left:1634px;top:1528.4px;width:176px;height:44px;background:#3a3a3c;border:2px solid #69696b;border-radius:10px;box-shadow:inset 0 0 0 1px #404042,inset 0 0 0 3px #69696b"></div>
<div class="t" style="left:1645.5px;top:1542.2px;font-size:18.5px;color:#fff;">0</div>
<div class="t" style="left:1763px;top:1540.7px;font-size:18.5px;color:#b0b0b2;">px</div>
<svg style="left:1790px;top:1542.4px" width="10" height="18" viewBox="0 0 10 18"><path d="M5 0 L10 6 H0Z M0 12 H10 L5 18Z" fill="#c4c4c6"/></svg>
<div class="a" style="left:1825px;top:1528.4px;width:176px;height:44px;background:#3a3a3c;border:2px solid #69696b;border-radius:10px;box-shadow:inset 0 0 0 1px #404042,inset 0 0 0 3px #69696b"></div>
<div class="t" style="left:1836.5px;top:1542.2px;font-size:18.5px;color:#fff;">0</div>
<div class="t" style="left:1954px;top:1540.7px;font-size:18.5px;color:#b0b0b2;">px</div>
<svg style="left:1981px;top:1542.4px" width="10" height="18" viewBox="0 0 10 18"><path d="M5 0 L10 6 H0Z M0 12 H10 L5 18Z" fill="#c4c4c6"/></svg>
<div class="a" style="left:1626px;top:1572.5px;width:382px;height:2px;background:#333335"></div>
<div class="a" style="left:1609px;top:1599px;width:416px;height:2px;background:#333335"></div>
<div class="t" style="left:1616.7px;top:1620.8px;font-size:18.5px;color:#a8a8aa;">Padding</div>
<div class="a" style="left:1617px;top:1647.5px;width:401px;height:300px;background:#242426;border:1px solid #1f1f21;border-radius:4px"></div>
<div class="t" style="left:1634.3px;top:1675.8px;font-size:18.5px;color:#a8a8aa;">Top</div>
<div class="t" style="left:1825.2px;top:1675.8px;font-size:18.5px;color:#a8a8aa;">Right</div>
<div class="a" style="left:1634px;top:1702.5px;width:176px;height:44px;background:#3a3a3c;border:2px solid #69696b;border-radius:10px;box-shadow:inset 0 0 0 1px #404042,inset 0 0 0 3px #69696b"></div>
<div class="t" style="left:1645.5px;top:1716.3px;font-size:18.5px;color:#a0a0a2;">0</div>
<div class="a" style="left:1763px;top:1723.5px;width:6px;height:2px;background:#d0d0d0"></div>
<svg style="left:1790px;top:1716.5px" width="10" height="18" viewBox="0 0 10 18"><path d="M5 0 L10 6 H0Z M0 12 H10 L5 18Z" fill="#c4c4c6"/></svg>
<div class="a" style="left:1825px;top:1702.5px;width:176px;height:44px;background:#3a3a3c;border:2px solid #69696b;border-radius:10px;box-shadow:inset 0 0 0 1px #404042,inset 0 0 0 3px #69696b"></div>
<div class="t" style="left:1836.5px;top:1716.3px;font-size:18.5px;color:#a0a0a2;">0</div>
<div class="a" style="left:1955px;top:1723.5px;width:6px;height:2px;background:#d0d0d0"></div>
<svg style="left:1981px;top:1716.5px" width="10" height="18" viewBox="0 0 10 18"><path d="M5 0 L10 6 H0Z M0 12 H10 L5 18Z" fill="#c4c4c6"/></svg>
<div class="a" style="left:1626px;top:1747px;width:382px;height:2px;background:#333335"></div>
<div class="t" style="left:1634.3px;top:1768.7px;font-size:18.5px;color:#a8a8aa;">Bottom</div>
<div class="t" style="left:1825.2px;top:1768.7px;font-size:18.5px;color:#a8a8aa;">Left</div>
<div class="a" style="left:1634px;top:1794px;width:176px;height:44px;background:#3a3a3c;border:2px solid #69696b;border-radius:10px;box-shadow:inset 0 0 0 1px #404042,inset 0 0 0 3px #69696b"></div>
<div class="t" style="left:1645.5px;top:1807.8px;font-size:18.5px;color:#a0a0a2;">0</div>
<div class="a" style="left:1763px;top:1815px;width:6px;height:2px;background:#d0d0d0"></div>
<svg style="left:1790px;top:1808px" width="10" height="18" viewBox="0 0 10 18"><path d="M5 0 L10 6 H0Z M0 12 H10 L5 18Z" fill="#c4c4c6"/></svg>
<div class="a" style="left:1825px;top:1794px;width:176px;height:44px;background:#3a3a3c;border:2px solid #69696b;border-radius:10px;box-shadow:inset 0 0 0 1px #404042,inset 0 0 0 3px #69696b"></div>
<div class="t" style="left:1836.5px;top:1807.8px;font-size:18.5px;color:#a0a0a2;">0</div>
<div class="a" style="left:1955px;top:1815px;width:6px;height:2px;background:#d0d0d0"></div>
<svg style="left:1981px;top:1808px" width="10" height="18" viewBox="0 0 10 18"><path d="M5 0 L10 6 H0Z M0 12 H10 L5 18Z" fill="#c4c4c6"/></svg>
<div class="a" style="left:0;top:1804px;width:2082px;height:4px;background:#000"></div>

</body></html>
